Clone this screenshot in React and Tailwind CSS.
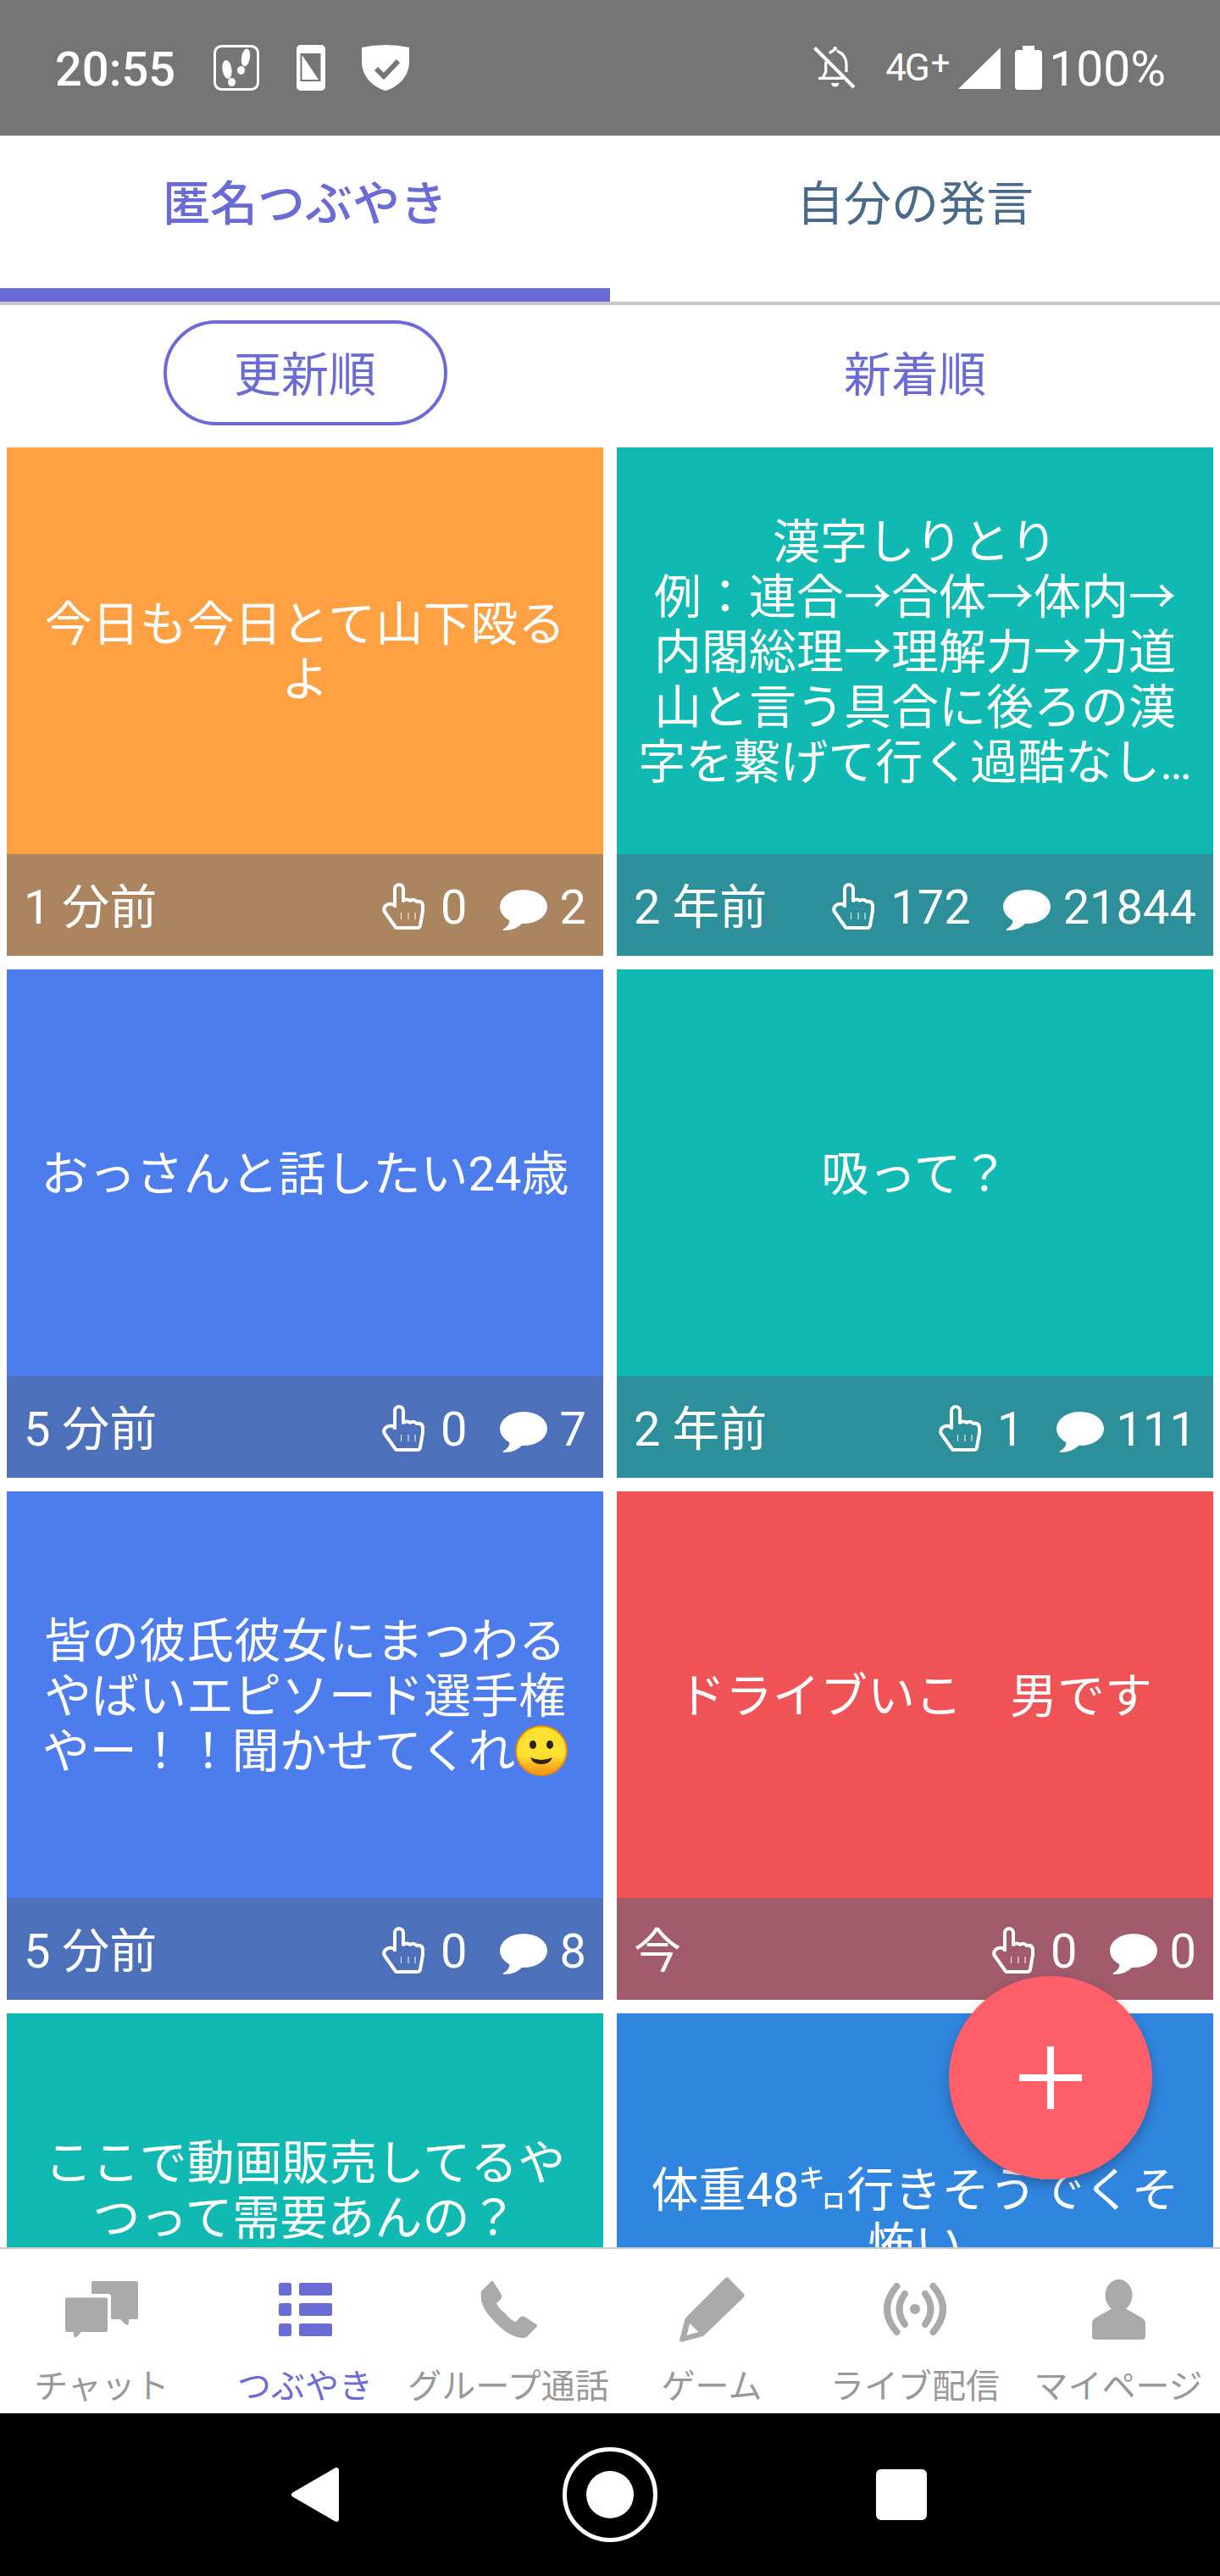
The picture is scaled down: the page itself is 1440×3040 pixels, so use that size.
const cards = [
  { text: "今日も今日とて山下殴るよ", time: "1 分前", likes: 0, comments: 2, body: "bg-[#ffa042]", foot: "bg-[#ab8460]" },
  {
    text: "漢字しりとり\n例：連合→合体→体内→内閣総理→理解力→力道山と言う具合に後ろの漢字を繋げて行く過酷なし…",
    time: "2 年前",
    likes: 172,
    comments: 21844,
    body: "bg-[#10b9b1]",
    foot: "bg-[#2d8f99]",
  },
  { text: "おっさんと話したい24歳", time: "5 分前", likes: 0, comments: 7, body: "bg-[#4d7cec]", foot: "bg-[#4c70ba]" },
  { text: "吸って？", time: "2 年前", likes: 1, comments: 111, body: "bg-[#10b9b1]", foot: "bg-[#2d8f99]" },
  {
    text: "皆の彼氏彼女にまつわるやばいエピソード選手権やー！！聞かせてくれ",
    emoji: true,
    time: "5 分前",
    likes: 0,
    comments: 8,
    body: "bg-[#4d7cec]",
    foot: "bg-[#4c70ba]",
  },
  { text: "ドライブいこ　男です", time: "今", likes: 0, comments: 0, body: "bg-[#f05356]", foot: "bg-[#a15b6c]" },
  // the third line of this one sits under the bottom nav, only its height matters
  { text: "ここで動画販売してるやつって需要あんの？\n　", body: "bg-[#10b9b1]", foot: "bg-[#2d8f99]" },
  { text: "体重48㌔行きそうでくそ怖い", body: "bg-[#3085de]", foot: "bg-[#3d74b0]" },
];

const HandIcon = () => (
  <svg width="52" height="56" viewBox="0 0 52 56" fill="none" stroke="white" strokeWidth="4" strokeLinejoin="round" className="mt-1 shrink-0">
    <path d="M16 29V7a5 5 0 0 1 10 0V21q4.500-3 8 0q4-3 8 1q6-1 7 4V33L46 50q-.5 3-3 3H19q-2 0-3-2L4 34q-2-4 1-7q4-4 11-1" />
    <path d="M23.500 35V43M32 35V43M40 35V43" strokeWidth="1" />
  </svg>
);

const BubbleIcon = () => (
  <svg width="56" height="48" viewBox="0 0 56 48" fill="white" className="mt-3 shrink-0">
    <ellipse cx="28" cy="20" rx="28" ry="20" />
    <path d="M11 35q2 6-7 11.500q-1 1.500 1 1.500q14 0 22-9z" />
  </svg>
);

const SmileEmoji = () => (
  <svg width="62" height="60" viewBox="0 0 62 60" className="inline-block align-[-10px]">
    <defs>
      <linearGradient id="smileFill" x1="0" y1="0" x2="0" y2="1">
        <stop offset="0.6" stopColor="#fde030" />
        <stop offset="0.9" stopColor="#f7a01c" />
      </linearGradient>
    </defs>
    <ellipse cx="31" cy="30" rx="30" ry="29" fill="url(#smileFill)" stroke="#e8890c" strokeWidth="2" />
    <ellipse cx="21" cy="23" rx="4" ry="5" fill="#2b2118" />
    <ellipse cx="41" cy="23" rx="4" ry="5" fill="#2b2118" />
    <path d="M18 38q13 6 26 0q-3 8-13 8t-13-8z" fill="#2b2118" />
  </svg>
);

const Card = ({ card }) => (
  <div className="flex h-[600px] flex-col text-white">
    <div className={`flex h-[480px] items-center justify-center px-5 pt-1 text-center ${card.body}`}>
      <p className="whitespace-pre-line text-[56px] leading-[65px]">
        {card.text}
        {card.emoji && <SmileEmoji />}
      </p>
    </div>
    <div className={`flex h-[120px] items-center justify-between pl-5 pr-5 text-[56px] ${card.foot}`}>
      {card.time && (
        <>
          <span className="block whitespace-nowrap pt-[5px]">{card.time}</span>
          <div className="flex items-center">
            <HandIcon />
            <span className="ml-[18px] mr-[38px] block pt-[5px]">{card.likes}</span>
            <BubbleIcon />
            <span className="ml-[15px] block pt-[5px]">{card.comments}</span>
          </div>
        </>
      )}
    </div>
  </div>
);

const StatusBar = () => (
  <div className="flex h-[160px] items-center justify-between bg-[#757575] pl-[65px] pr-[64px] text-white">
    <div className="flex items-center">
      <span className="mr-[45px] block pt-1 text-[56px] font-medium">20:55</span>
      <svg width="54" height="54" viewBox="0 0 54 54" fill="white" className="mr-[44px]">
        <rect x="1.500" y="1.500" width="51" height="51" rx="8" fill="none" stroke="white" strokeWidth="3" />
        <ellipse cx="16" cy="29" rx="5.500" ry="11" transform="rotate(-8 16 29)" />
        <ellipse cx="21.500" cy="44" rx="4.500" ry="5" />
        <ellipse cx="38" cy="15" rx="5" ry="10.500" transform="rotate(10 38 15)" />
        <ellipse cx="32.500" cy="30" rx="4.500" ry="5" />
      </svg>
      <svg width="34" height="54" viewBox="0 0 34 54" className="mr-[43px]">
        <rect width="34" height="54" rx="5" fill="white" />
        <rect x="4.500" y="10" width="24" height="33" fill="#757575" />
        <path d="M6.500 12L26 41H6.500z" fill="white" />
      </svg>
      <svg width="56" height="54" viewBox="0 0 56 54">
        <path d="M28 0Q14 0 0 3V20C0 38 14 50 28 54C42 50 56 38 56 20V3Q42 0 28 0Z" fill="white" />
        <path d="M17 28L26 37L43 19" fill="none" stroke="#757575" strokeWidth="6" />
      </svg>
    </div>
    <div className="flex items-center">
      <svg width="50" height="50" viewBox="0 0 50 50" fill="none" stroke="white" strokeWidth="3.200" className="mr-[35px]">
        <path d="M1.500 1.500L48 48" strokeWidth="4" />
        <path d="M28 5C35 8 39 14 39 21V30" />
        <path d="M14.700 18V30L11 37.300M6 37.300H35" />
        <path d="M19 8Q21 5 25 4.500" />
        <circle cx="25.700" cy="2.500" r="2.500" fill="white" stroke="none" />
        <path d="M21 43H30.500Q29.500 47.500 25.700 47.500Q22 47.500 21 43Z" fill="white" stroke="none" />
      </svg>
      <div className="mr-[10px] flex w-[76px] items-start whitespace-nowrap text-[44px] leading-[48px] tracking-[-2px]">
        4G
        <span className="ml-[3px] text-[40px] leading-[38px]">+</span>
      </div>
      <svg width="50" height="49" viewBox="0 0 50 49" fill="white" className="mr-[17px]">
        <path d="M0 49L50 0V49Z" />
      </svg>
      <svg width="32" height="52" viewBox="0 0 32 52" fill="white" className="mr-[8px]">
        <path d="M9 0H23V5H28Q32 5 32 9V48Q32 52 28 52H4Q0 52 0 48V9Q0 5 4 5H9Z" />
      </svg>
      <span className="block pt-1 text-[57px]">100%</span>
    </div>
  </div>
);

const TopTabs = () => (
  <div className="grid h-[200px] grid-cols-2 border-b-4 border-[#c8c8c8] text-[56px]">
    <div className="flex items-center justify-center border-b-16 border-[#6b6bd6] pb-[18px] font-medium text-[#6b6bd6]">匿名つぶやき</div>
    <div className="flex items-center justify-center pb-[34px] text-[#4a6a8c]">自分の発言</div>
  </div>
);

const SortRow = () => (
  <div className="grid grid-cols-2 pb-[26px] pt-[18px] text-[56px] text-[#6b6bd6]">
    <div className="flex justify-center">
      <div className="flex h-[124px] w-[335px] items-center justify-center rounded-full border-4 border-[#6b6bd6] pt-[6px]">更新順</div>
    </div>
    <div className="flex h-[124px] items-center justify-center pt-[6px]">新着順</div>
  </div>
);

const navItems = [
  {
    label: "チャット",
    icon: (
      <svg width="87" height="67" viewBox="0 0 87 67" fill="#aaaaaa">
        <path d="M31 2Q31 0 33 0H84Q86 0 86 2V43Q86 45 84 45H75V50Q74 53 71 51L65 45H54V18Q54 15 51 15H31Z" />
        <path d="M2 19.500H48Q50 19.500 50 21.500V58Q50 60 48 60H19L13 66Q10 67 10 64V60H2Q0 60 0 58V21.500Q0 19.500 2 19.500Z" />
      </svg>
    ),
  },
  {
    label: "つぶやき",
    active: true,
    icon: (
      <svg width="63" height="63" viewBox="0 0 63 63" fill="#6b6bd6">
        <rect width="15" height="15" rx="2.500" />
        <rect x="24" width="39" height="15" rx="2" />
        <rect y="24" width="15" height="15" rx="2.500" />
        <rect x="24" y="24" width="39" height="15" rx="2" />
        <rect y="48" width="15" height="15" rx="2.500" />
        <rect x="24" y="48" width="39" height="15" rx="2" />
      </svg>
    ),
  },
  {
    label: "グループ通話",
    icon: (
      <svg width="67" height="68" viewBox="0 0 67 68" fill="#aaaaaa">
        <path d="M1 13L12.500 1.500Q14.500 0 15.500 2L25 17Q26 20 23.500 23L19 27Q19.500 31 29 39Q37 48 41.500 49L47 43.500Q50 41.500 53 43.500L66 52Q68 53.500 66 55.500L55 66.500Q52.500 68.500 49 68C36 67 24 57 15 47C5 36 -1 27 1 13Z" />
      </svg>
    ),
  },
  {
    label: "ゲーム",
    icon: (
      <svg width="77" height="77" viewBox="0 0 77 77" fill="#aaaaaa">
        <path
          fillRule="evenodd"
          d="M0 75L6.700 49L54.500 1Q56 0 57.500 1L76 20Q77 22 76 24L28 70L3 76.700Q0 77 0 75ZM12 55L8.500 69L22.600 65Z"
        />
      </svg>
    ),
  },
  {
    label: "ライブ配信",
    icon: (
      <svg width="74" height="62" viewBox="0 0 74 62" fill="none" stroke="#aaaaaa" strokeWidth="8" strokeLinecap="round">
        <path d="M15.500 4Q-7.500 31 15.500 58M58.500 4Q81.500 31 58.500 58" />
        <path d="M25 13Q12 31 25 49M49 13Q62 31 49 49" />
        <circle cx="37" cy="31" r="6" fill="#aaaaaa" stroke="none" />
      </svg>
    ),
  },
  {
    label: "マイページ",
    icon: (
      <svg width="63" height="71" viewBox="0 0 63 71" fill="#aaaaaa">
        <ellipse cx="31.500" cy="18.700" rx="16" ry="18.700" />
        <path d="M24 34L3 46Q0 48 0 51V67Q0 71 4 71H59Q63 71 63 67V51Q63 48 60 46L39 34Z" />
      </svg>
    ),
  },
];

const BottomNav = () => (
  <div className="grid h-[196px] grid-cols-6 border-t-2 border-[#c8c8c8] bg-white pt-[31px]">
    {navItems.map((item) => (
      <div key={item.label} className="flex flex-col items-center">
        <div className="flex h-[80px] items-center justify-center">{item.icon}</div>
        <span className={`mt-[27px] whitespace-nowrap text-[40px] leading-[50px] ${item.active ? "text-[#6b6bd6]" : "text-[#999999]"}`}>
          {item.label}
        </span>
      </div>
    ))}
  </div>
);

const AndroidBar = () => (
  <div className="flex h-[192px] items-center bg-black">
    <div className="flex w-[720px] items-center justify-between pl-[344px] pr-0">
      <svg width="56" height="64" viewBox="0 0 56 64" fill="white" stroke="white" strokeWidth="6" strokeLinejoin="round">
        <path d="M3 32L53 3V61Z" />
      </svg>
      <div className="flex h-[112px] w-[112px] translate-x-1/2 items-center justify-center rounded-full border-[5px] border-white">
        <div className="h-[56px] w-[56px] rounded-full bg-white" />
      </div>
    </div>
    <div className="ml-[314px] h-[60px] w-[60px] rounded-md bg-white" />
  </div>
);

export default function App() {
  return (
    <div className="relative flex h-[3040px] w-[1440px] flex-col overflow-hidden bg-white font-[Roboto,'Noto_Sans_CJK_JP',sans-serif]">
      <StatusBar />
      <TopTabs />
      <SortRow />
      <div className="min-h-0 flex-1 overflow-hidden px-2">
        <div className="grid grid-cols-2 gap-4">
          {cards.map((card, i) => (
            <Card key={i} card={card} />
          ))}
        </div>
      </div>
      <BottomNav />
      <AndroidBar />
      <button className="absolute bottom-[468px] right-[80px] flex h-[240px] w-[240px] items-center justify-center rounded-full bg-[#ff5f69] shadow-[0_6px_14px_rgba(0,0,0,0.25)]">
        <svg width="74" height="74" viewBox="0 0 74 74" fill="white">
          <rect x="33" width="8" height="74" />
          <rect y="33" width="74" height="8" />
        </svg>
      </button>
    </div>
  );
}
